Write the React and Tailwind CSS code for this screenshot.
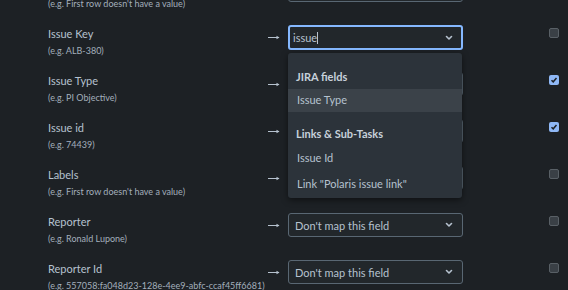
import React from 'react';

// rows under the open menu (and the one scrolled off the top) keep their select box without visible text
const rows = [
  { label: 'Summary', example: "(e.g. First row doesn't have a value)", checked: false, covered: true },
  { label: 'Issue Key', example: '(e.g. ALB-380)', checked: false, focused: true },
  { label: 'Issue Type', example: '(e.g. PI Objective)', checked: true, covered: true },
  { label: 'Issue id', example: '(e.g. 74439)', checked: true, covered: true },
  { label: 'Labels', example: "(e.g. First row doesn't have a value)", checked: false, covered: true },
  { label: 'Reporter', example: '(e.g. Ronald Lupone)', checked: false },
  { label: 'Reporter Id', example: '(e.g. 557058:fa048d23-128e-4ee9-abfc-ccaf45ff6681)', checked: false },
];

const Chevron = () => (
  <svg width="8" height="6" viewBox="0 0 8 6" className="shrink-0">
    <path d="M1.5 1.5 L4 4 L6.5 1.5" stroke="#b6c2cf" strokeWidth="1.6" fill="none" strokeLinecap="round" strokeLinejoin="round" />
  </svg>
);

const Arrow = () => (
  <svg width="12" height="5" viewBox="0 0 12 5">
    <path d="M0 2.5 H11" stroke="#b6c2cf" strokeWidth="1" />
    <path d="M8.5 0.8 L11.5 2.5 L8.5 4.2 Z" fill="#b6c2cf" />
  </svg>
);

const Checkbox = ({ checked }) =>
  checked ? (
    <div className="w-[10px] h-[10px] rounded-[2px] bg-[#8fb8f6] flex items-center justify-center">
      <svg width="8" height="8" viewBox="0 0 8 8">
        <path d="M1.5 4.2 L3.2 5.8 L6.5 2" stroke="#1d2125" strokeWidth="1.5" fill="none" />
      </svg>
    </div>
  ) : (
    <div className="w-[10px] h-[10px] rounded-[2px] bg-[#3a4046] border border-[#596066]" />
  );

const Select = ({ focused, covered }) =>
  focused ? (
    <div className="w-[175px] h-[25px] rounded-[3px] border-2 border-[#85b8ff] bg-[#22272b] flex items-center pl-[3px] pr-[8px]">
      <span className="text-[11px] text-[#b6c2cf] leading-none">issue</span>
      <span className="w-px h-[12px] bg-[#b6c2cf]" />
      <span className="flex-1" />
      <Chevron />
    </div>
  ) : (
    <div className="w-[175px] h-[24px] rounded-[3px] border border-[#596773] bg-[#22272b] flex items-center pl-[6px] pr-[9px]">
      <span className="flex-1 text-[11px] text-[#b6c2cf] leading-none">{covered ? '' : "Don't map this field"}</span>
      <Chevron />
    </div>
  );

const Row = ({ row }) => (
  <div className="h-[47px] flex items-start">
    <div className="w-[268px] pl-[48px] pt-[4px] flex flex-col">
      <span className="text-[11px] leading-[16px] text-[#b6c2cf]">{row.label}</span>
      <span className="mt-[2px] text-[9px] leading-[14px] text-[#a3afbc] whitespace-nowrap">{row.example}</span>
    </div>
    <div className="w-[20px] pt-[13px]">
      <Arrow />
    </div>
    <div className="pt-[3px]">
      <Select focused={row.focused} covered={row.covered} />
    </div>
    <div className="ml-[86px] pt-[6px]">
      <Checkbox checked={row.checked} />
    </div>
  </div>
);

const MenuHeader = ({ children, className }) => (
  <div className={`h-[24px] flex items-center pl-[8px] text-[11px] font-bold text-[#c7d1db] ${className || ''}`}>{children}</div>
);

const MenuItem = ({ children, active, className }) => (
  <div className={`flex items-center pl-[9px] text-[11px] text-[#b6c2cf] ${active ? 'bg-[#3b4249]' : ''} ${className || ''}`}>{children}</div>
);

export default function App() {
  return (
    <div className="w-[568px] h-[290px] bg-[#1d2125] overflow-hidden relative" style={{ fontFamily: 'Lato, "Noto Sans", sans-serif' }}>
      <div className="-mt-[25px]">
        {rows.map((row) => (
          <Row key={row.label} row={row} />
        ))}
      </div>

      <div className="absolute left-[288px] top-[53px] w-[174px] h-[145px] rounded-[3px] bg-[#2c333a] shadow-[0_2px_6px_rgba(0,0,0,0.5)] pt-[12px]">
        <MenuHeader>JIRA fields</MenuHeader>
        <MenuItem active className="h-[23px]">Issue Type</MenuItem>
        <MenuHeader className="mt-[10px]">Links &amp; Sub-Tasks</MenuHeader>
        <MenuItem className="h-[25px]">Issue Id</MenuItem>
        <MenuItem className="h-[26px]">Link "Polaris issue link"</MenuItem>
      </div>
    </div>
  );
}
